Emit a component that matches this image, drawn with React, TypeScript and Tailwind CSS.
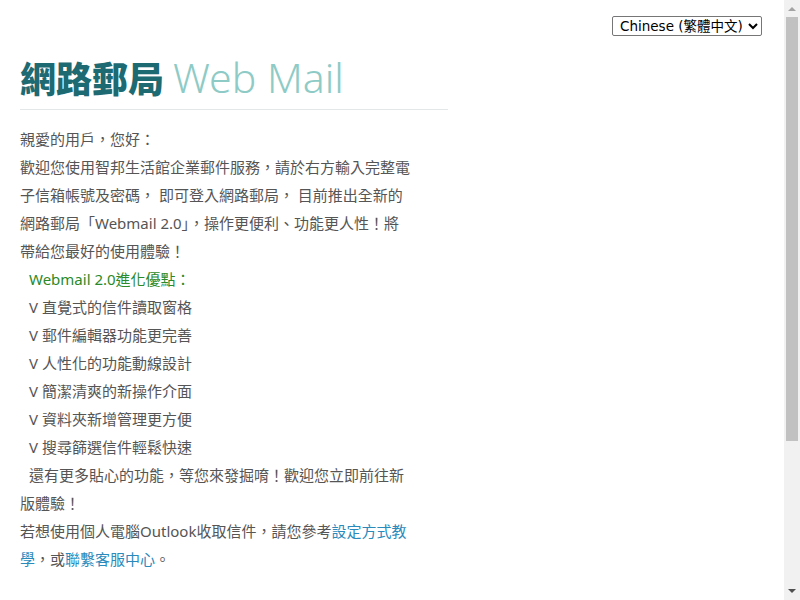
import React from "react";

function FakeScrollbar() {
  return (
    <div className="flex h-full w-[16px] shrink-0 flex-col bg-[#f1f1f1]">
      <div className="flex h-[17px] items-center justify-center">
        <svg width="8" height="5" viewBox="0 0 8 5">
          <path d="M0 5 L4 1 L8 5 Z" fill="#a3a3a3" />
        </svg>
      </div>
      <div className="flex flex-1 flex-col px-[2px]">
        <div className="h-[424px] bg-[#c1c1c1]" />
      </div>
      <div className="flex h-[17px] items-center justify-center">
        <svg width="8" height="5" viewBox="0 0 8 5">
          <path d="M0 0 L4 4 L8 0 Z" fill="#505050" />
        </svg>
      </div>
    </div>
  );
}

export default function App() {
  const features = [
    "直覺式的信件讀取窗格",
    "郵件編輯器功能更完善",
    "人性化的功能動線設計",
    "簡潔清爽的新操作介面",
    "資料夾新增管理更方便",
    "搜尋篩選信件輕鬆快速",
  ];
  return (
    <div className="flex h-[600px] overflow-hidden bg-white font-['Noto_Sans','Noto_Sans_CJK_TC',sans-serif]">
      <div className="min-w-0 flex-1">
        <div className="flex justify-end pt-[16px] pr-[22px]">
          <select
            defaultValue="zh-TW"
            className="h-[20px] w-[150px] rounded-[2px] border border-[#767676] bg-white pl-[3px] font-['DejaVu_Sans','Noto_Sans_CJK_TC',sans-serif] text-[13.5px] text-black"
          >
            <option value="zh-TW">Chinese (繁體中文)</option>
            <option value="zh-CN">Chinese (简体中文)</option>
            <option value="en">English</option>
          </select>
        </div>
        <div className="ml-[20px] w-[428px]">
          <h1 className="flex items-baseline border-b border-[#e4e7e7] pt-[16px] pb-[7px] leading-[50px]">
            <span className="font-['Noto_Sans_CJK_TC',sans-serif] text-[36px] font-black text-[#1e6a72]">網路郵局</span>
            <span className="ml-[9px] text-[41px] font-light text-[#8ecbc6]">Web Mail</span>
          </h1>
          <div className="mt-[15px] w-[400px] text-[15px] leading-[28px] text-[#555555]">
            <p>親愛的用戶，您好：</p>
            <p>
              歡迎您使用智邦生活館企業郵件服務，請於右方輸入完整電
              <br />
              子信箱帳號及密碼，&nbsp;即可登入網路郵局，&nbsp;目前推出全新的
              <br />
              網路郵局「Webmail 2.0」，操作更便利、功能更人性！將
              <br />
              帶給您最好的使用體驗！
            </p>
            <p className="text-[#2a8a2a]">
              <span className="inline-block w-[9px]" />
              Webmail 2.0進化優點：
            </p>
            {features.map((f) => (
              <p key={f}>
                <span className="inline-block w-[9px]" />V {f}
              </p>
            ))}
            <p>
              <span className="inline-block w-[9px]" />
              還有更多貼心的功能，等您來發掘唷！歡迎您立即前往新
              <br />
              版體驗！
            </p>
            <p>
              若想使用個人電腦Outlook收取信件，請您參考
              <a href="#" className="text-[#2a8abb]">
                設定方式教
                <br />學
              </a>
              ，或
              <a href="#" className="text-[#2a8abb]">
                聯繫客服中心
              </a>
              。
            </p>
          </div>
        </div>
      </div>
      <FakeScrollbar />
    </div>
  );
}
